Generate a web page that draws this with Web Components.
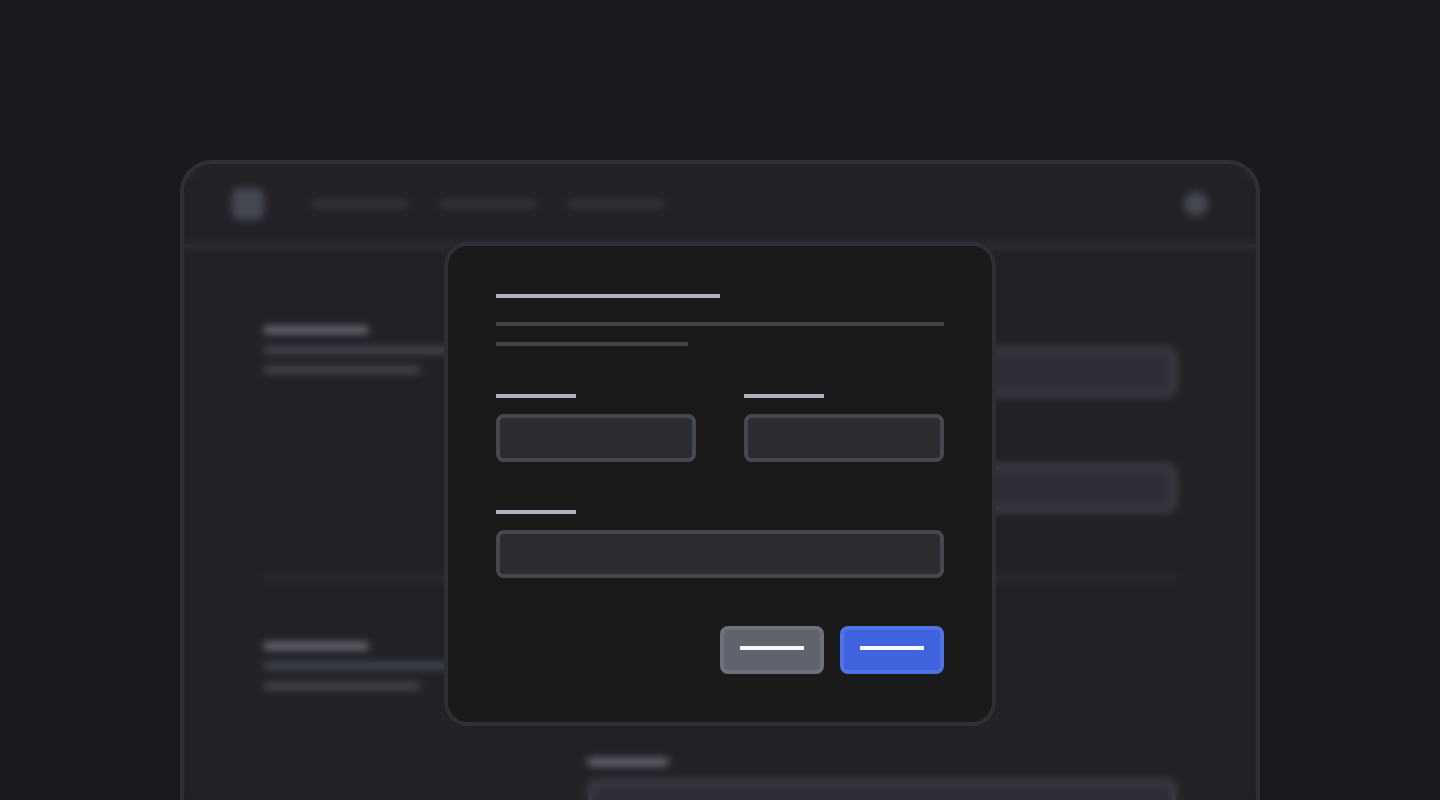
<!DOCTYPE html>
<html lang="en">
<head>
<meta charset="utf-8">
<meta name="viewport" content="width=device-width, initial-scale=1">
<title>Dialog over settings</title>
<style>
  html { background: #1a191e; }
  body {
    margin: 0;
    font-family: Inter, "Liberation Sans", sans-serif;
    --bg: #1a191e;
    --window: #222126;
    --line: #2f3036;
  }
</style>
</head>
<body>
<app-stage>
  <app-window>
    <app-header slot="header"></app-header>
    <settings-section>
      <form-field tone="dim"></form-field>
      <form-field tone="dim"></form-field>
    </settings-section>
    <settings-section>
      <form-field tone="dim" size="half"></form-field>
      <form-field tone="dim"></form-field>
    </settings-section>
    <app-dialog slot="dialog">
      <form-field></form-field>
      <form-field></form-field>
      <form-field wide></form-field>
      <app-button slot="actions" name="Cancel"></app-button>
      <app-button slot="actions" name="Save" primary></app-button>
    </app-dialog>
  </app-window>
</app-stage>

<script>
  class BaseElement extends HTMLElement {
    connectedCallback() {
      if (this.shadowRoot) return;
      this.attachShadow({ mode: "open" }).innerHTML =
        "<style>*{box-sizing:border-box}</style>" + this.render();
    }
  }

  customElements.define("app-stage", class extends BaseElement {
    render() {
      return `
        <style>
          :host { display: block; box-sizing: border-box; height: 100vh; overflow: hidden;
                  padding: 160px 48px 0; background: var(--bg); }
          main { max-width: 1080px; margin: 0 auto; }
        </style>
        <main><slot></slot></main>`;
    }
  });

  customElements.define("app-window", class extends BaseElement {
    render() {
      return `
        <style>
          :host { display: block; position: relative; box-sizing: border-box; overflow: hidden;
                  background: var(--window); border: 4px solid var(--line); border-radius: 32px; }
          .content { padding: 80px; }
          .overlay { position: absolute; inset: 0; backdrop-filter: blur(4px); }
          .dialog { position: absolute; inset: 78px 0 auto; display: flex; justify-content: center; }
        </style>
        <slot name="header"></slot>
        <div class="content"><slot></slot></div>
        <div class="overlay"></div>
        <div class="dialog"><slot name="dialog"></slot></div>`;
    }
  });

  // A text placeholder: a 4px bar in the current colour.
  customElements.define("text-bar", class extends BaseElement {
    render() {
      return `<style>:host { display: block; height: 4px; background: currentColor; }</style>`;
    }
  });

  customElements.define("app-header", class extends BaseElement {
    render() {
      return `
        <style>
          :host { display: block; border-bottom: 4px solid #34383b; }
          header { display: flex; align-items: center; gap: 48px; height: 80px; padding: 0 48px; }
          .logo { width: 32px; height: 32px; border-radius: 8px; background: #464852; }
          nav { display: flex; gap: 32px; flex: 1; }
          nav a { width: 96px; color: #454952; }
          button { width: 24px; height: 24px; padding: 0; border: 0; border-radius: 50%; background: #464852; }
        </style>
        <header>
          <a class="logo" href="#" aria-label="Home"></a>
          <nav>
            <a href="#" aria-label="Overview"><text-bar></text-bar></a>
            <a href="#" aria-label="Projects"><text-bar></text-bar></a>
            <a href="#" aria-label="Settings"><text-bar></text-bar></a>
          </nav>
          <button type="button" aria-label="Account"></button>
        </header>`;
    }
  });

  customElements.define("settings-section", class extends BaseElement {
    render() {
      return `
        <style>
          :host { display: grid; grid-template-columns: 260px 1fr; gap: 64px; padding-bottom: 64px; }
          :host(:not(:first-of-type)) { border-top: 4px solid #303437; padding-top: 64px; }
          .info { display: flex; flex-direction: column; gap: 16px; color: #626a76; }
          .title { width: 40%; color: #b2b1bf; }
          .short { width: 60%; }
          .fields { display: flex; flex-direction: column; gap: 48px; }
        </style>
        <div class="info">
          <text-bar class="title"></text-bar>
          <text-bar></text-bar>
          <text-bar class="short"></text-bar>
        </div>
        <div class="fields"><slot></slot></div>`;
    }
  });

  customElements.define("form-field", class extends BaseElement {
    render() {
      return `
        <style>
          :host { display: flex; flex-direction: column; gap: 16px;
                  --label: #b2b1bf; --fill: #2b2c30; --edge: #454850; }
          :host([tone="dim"]) { --fill: #2f2e37; }
          :host([size="half"]) { width: 50%; }
          :host([wide]) { grid-column: 1 / -1; }
          label { display: block; width: 80px; color: var(--label); }
          input { display: block; width: 100%; height: 48px; margin: 0; padding: 0 12px;
                  border: 4px solid var(--edge); border-radius: 8px; background: var(--fill);
                  color: var(--label); font: inherit; outline: none; }
        </style>
        <label for="field"><text-bar></text-bar></label>
        <input id="field" type="text" aria-label="Field">`;
    }
  });

  customElements.define("app-dialog", class extends BaseElement {
    render() {
      return `
        <style>
          :host { display: block; box-sizing: border-box; width: 100%; max-width: 552px; padding: 48px;
                  background: #1a1a1b; border: 4px solid var(--line); border-radius: 24px; }
          form { display: flex; flex-direction: column; gap: 48px; }
          .title { width: 50%; margin-bottom: 24px; color: #b2b1bf; }
          .text { display: flex; flex-direction: column; gap: 16px; color: #42434b; }
          .short { width: 192px; }
          .fields { display: grid; grid-template-columns: 1fr 1fr; gap: 48px; }
          .actions { display: flex; justify-content: flex-end; gap: 16px; }
        </style>
        <form role="dialog" aria-label="Edit details">
          <div>
            <text-bar class="title"></text-bar>
            <div class="text">
              <text-bar></text-bar>
              <text-bar class="short"></text-bar>
            </div>
          </div>
          <div class="fields"><slot></slot></div>
          <div class="actions"><slot name="actions"></slot></div>
        </form>`;
    }
  });

  customElements.define("app-button", class extends BaseElement {
    render() {
      return `
        <style>
          :host { display: block; --fill: #60636b; --edge: #6f707d; }
          :host([primary]) { --fill: #3e63dd; --edge: #5073e5; }
          button { display: flex; align-items: flex-start; width: 104px; height: 48px; margin: 0; padding: 16px;
                   border: 4px solid var(--edge); border-radius: 8px; background: var(--fill);
                   color: #f8f8f8; cursor: pointer; }
          text-bar { flex: 1; }
        </style>
        <button type="button" aria-label="${this.getAttribute("name")}"><text-bar></text-bar></button>`;
    }
  });
</script>
</body>
</html>
